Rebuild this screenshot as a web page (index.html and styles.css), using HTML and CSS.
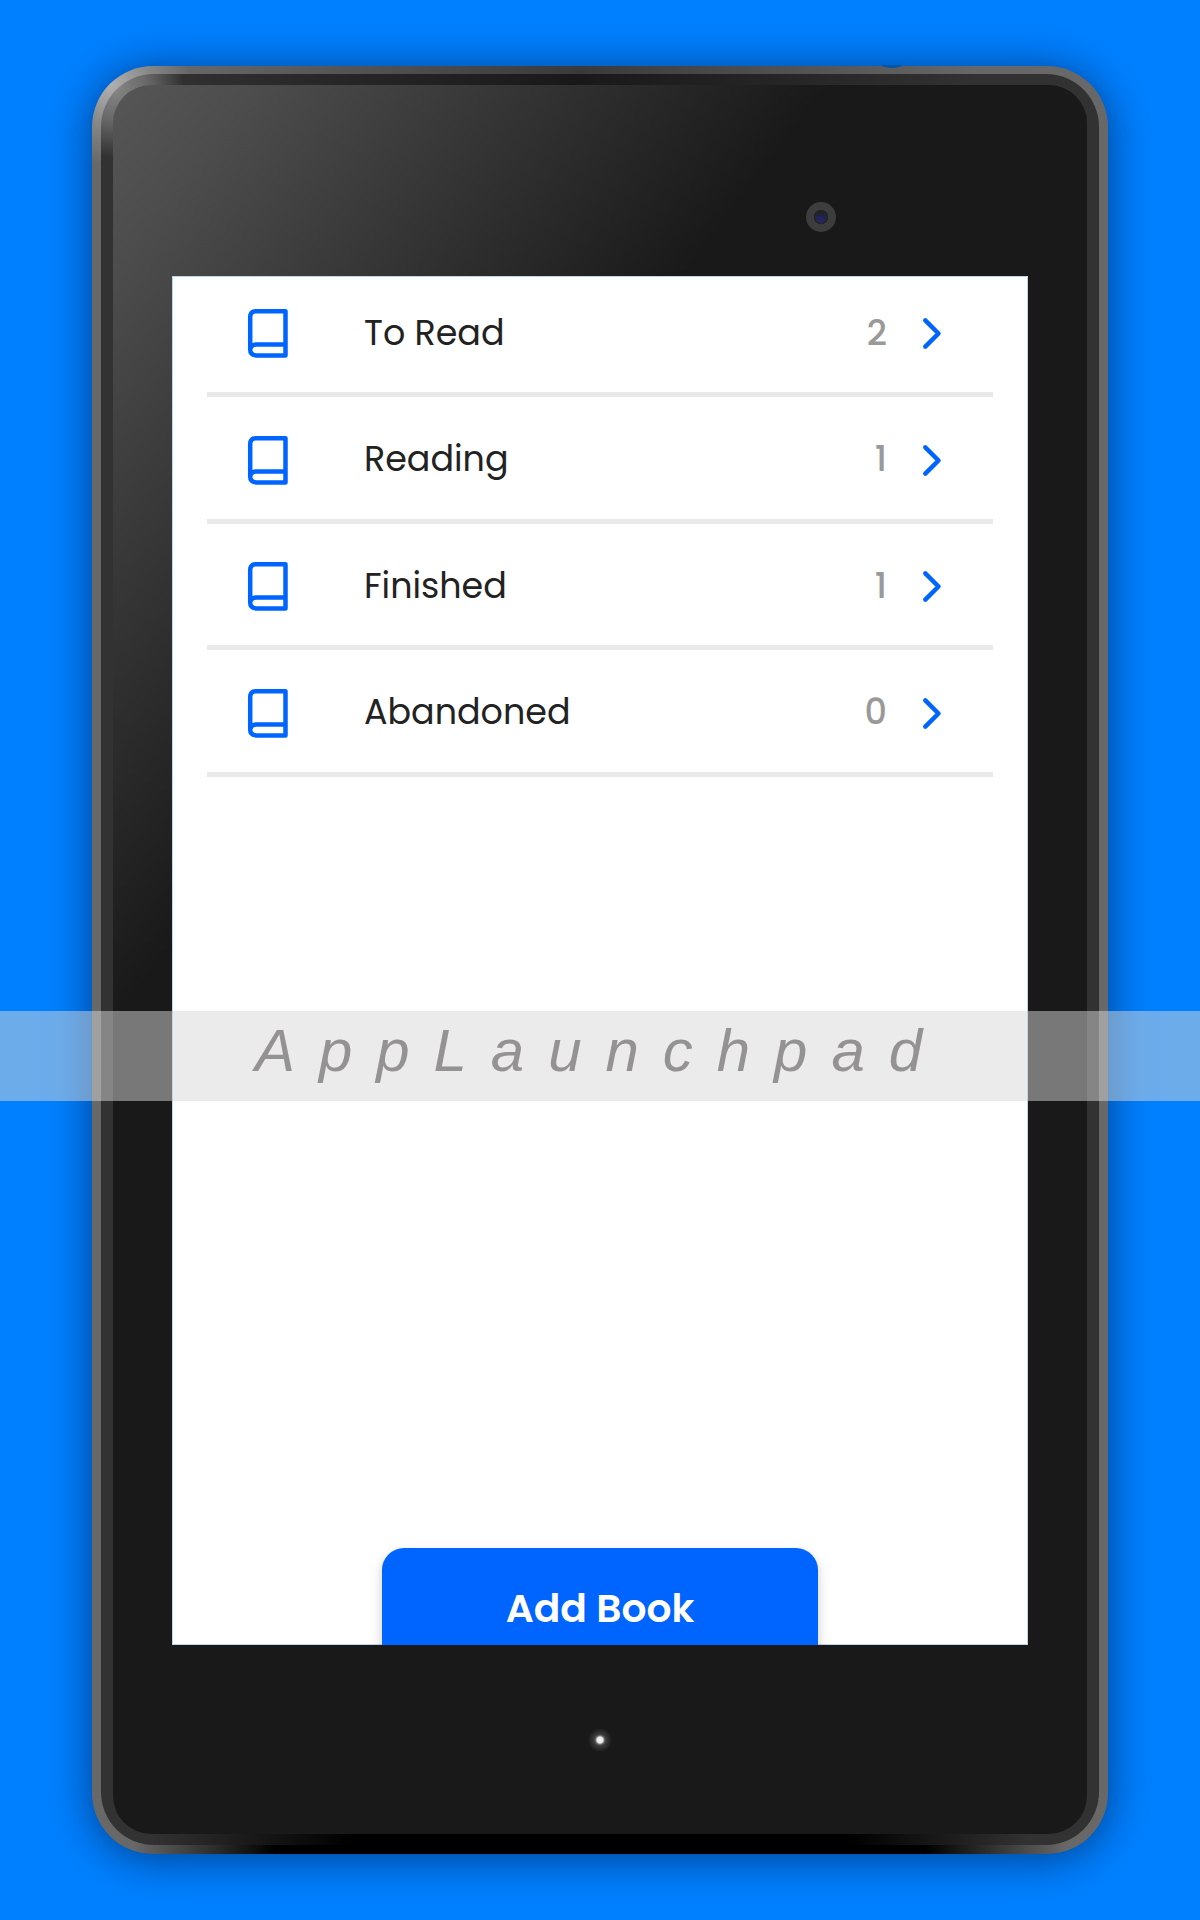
FILE: index.html
```html
<!DOCTYPE html>
<html lang="en">
<head>
<meta charset="utf-8">
<title>Books</title>
<link rel="stylesheet" href="styles.css">
</head>
<body>
<svg class="defs" width="0" height="0">
  <symbol id="book" viewBox="0 0 40 49"><path d="M7.5 2.2H37.5V46.4H7.5Q2.2 45.6 2.2 40.5V8Q2.2 2.2 7.5 2.2ZM2.2 40.5Q3 35.4 8 35.4H37.5"/></symbol>
  <symbol id="chevron" viewBox="0 0 18 31"><path d="M2.3 2.3L15.5 15.5L2.3 28.7"/></symbol>
</svg>
<main class="stage">
  <div class="device">
    <span class="power"></span>
    <div class="bezel">
      <div class="face">
        <span class="camera"></span>
        <section class="screen">
          <ul class="shelves">
            <li class="shelf"><svg class="book"><use href="#book"/></svg><span class="name">To Read</span><span class="count">2</span><svg class="chevron"><use href="#chevron"/></svg></li>
            <li class="shelf"><svg class="book"><use href="#book"/></svg><span class="name">Reading</span><span class="count">1</span><svg class="chevron"><use href="#chevron"/></svg></li>
            <li class="shelf"><svg class="book"><use href="#book"/></svg><span class="name">Finished</span><span class="count">1</span><svg class="chevron"><use href="#chevron"/></svg></li>
            <li class="shelf"><svg class="book"><use href="#book"/></svg><span class="name">Abandoned</span><span class="count">0</span><svg class="chevron"><use href="#chevron"/></svg></li>
          </ul>
          <button class="add">Add Book</button>
        </section>
        <span class="led"></span>
      </div>
    </div>
  </div>
  <div class="watermark">AppLaunchpad</div>
</main>
</body>
</html>
```
FILE: styles.css
```css
* { box-sizing: border-box; }
body { margin: 0; font-family: Poppins, Inter, "Open Sans", sans-serif; }
.defs { display: block; position: absolute; }
.stage { position: relative; width: 1200px; height: 1920px; padding: 66px 92px; background: #0080ff; overflow: hidden; }
.device {
  position: relative; width: 1016px; height: 1788px; padding: 8px 9px 9px; border-radius: 61px;
  background:
    radial-gradient(circle at 18px 18px, #b0b0b0 0, rgba(150,150,150,.7) 40px, rgba(106,106,106,0) 80px),
    linear-gradient(90deg, rgba(58,58,58,0) 8%, #3a3a3a 48%, rgba(58,58,58,0) 88%) top / 100% 9px no-repeat,
    linear-gradient(90deg, transparent 4%, #000 18%, #000 82%, transparent 96%) bottom / 100% 10px no-repeat,
    #686868;
  box-shadow: 0 4px 44px rgba(0,10,40,.55);
}
.power { position: absolute; top: -1px; left: 790px; width: 20px; height: 3px; background: #0456a6; border-radius: 0 0 10px 10px / 0 0 3px 3px; }
.bezel {
  height: 1771px; padding: 11px 12px; border-radius: 53px;
  background:
    radial-gradient(circle at 15px 15px, #858585 0, rgba(120,120,120,.8) 30px, rgba(50,50,50,0) 68px),
    linear-gradient(90deg, rgba(25,25,25,0) 5%, #191919 48%, rgba(25,25,25,0) 88%) top / 100% 12px no-repeat,
    linear-gradient(90deg, transparent 5%, #000 25%, #000 75%, transparent 93%) bottom / 100% 12px no-repeat,
    #323232;
}
.face {
  display: flex; flex-direction: column; align-items: center; height: 1749px; border-radius: 38px;
  background: linear-gradient(127.4deg, #565656 0, #4d4d4d 6%, #191919 31%);
}
.camera {
  flex: none; width: 30px; height: 30px; margin: 117px 0 44px 441px; border-radius: 50%;
  background: radial-gradient(circle, transparent 5.5px, #242424 6px, #242424 7px, #3d3d3d 7.5px), linear-gradient(#20202a 35%, #25256a 65%);
}
.screen { flex: none; display: flex; flex-direction: column; width: 856px; height: 1369px; overflow: hidden; background: #fff; box-shadow: inset 0 0 0 1px #b9d7f5; }
.shelves { flex: 1; list-style: none; margin: -5.5px 35px 0; padding: 0; }
.shelf { display: flex; align-items: center; height: 126.6px; padding: 5px 52px 0 41px; border-bottom: 5px solid #e9e9e9; }
.book { width: 40px; height: 49px; }
.book, .chevron { flex: none; overflow: visible; }
symbol { overflow: visible; }
symbol path { fill: none; stroke: #0064ff; stroke-width: 4.5; stroke-linecap: round; stroke-linejoin: round; }
.name { flex: 1; padding-left: 76px; font-size: 34.9px; line-height: 50px; margin-top: -2.4px; color: #222; white-space: nowrap; }
.count { margin: -2.4px 36px 0 0; font-size: 35px; line-height: 50px; font-weight: 500; color: #999; }
.chevron { width: 18px; height: 31px; }
.add {
  flex: none; align-self: center; width: 436px; height: 134px; margin-bottom: -36.5px; padding: 0 0 12px; border: 0; border-radius: 22px;
  background: #0064ff; color: #fff; font: 600 39.2px/1 Poppins, Inter, "Open Sans", sans-serif; box-shadow: 0 5px 12px rgba(0,0,0,.2);
}
.led { width: 24px; height: 24px; margin-top: 83px; border-radius: 50%; background: radial-gradient(circle, #f4f4f4 0, #e8e8e8 3px, #666 4.5px, #3b3b3b 6px, #191919 12px); }
.watermark {
  position: absolute; top: 1011px; left: 0; width: 100%; height: 90px; background: rgba(215,215,215,.5);
  color: #949292; font: italic 60px/79px "Liberation Sans", Arial, sans-serif; letter-spacing: 23.95px; text-indent: 1px; text-align: center; white-space: nowrap;
}
```
